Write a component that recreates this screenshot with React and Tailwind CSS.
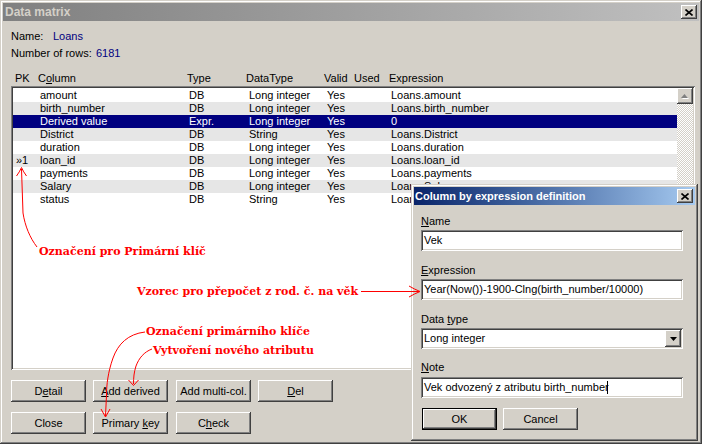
import React from "react";

const raised =
  "shadow-[inset_-1px_-1px_#404040,inset_1px_1px_#ffffff,inset_-2px_-2px_#808080]";
const sunken =
  "shadow-[inset_1px_1px_#808080,inset_-1px_-1px_#ffffff,inset_2px_2px_#404040,inset_-2px_-2px_#d4d0c8]";

function CloseX() {
  return (
    <svg width="8" height="7" viewBox="0 0 8 7">
      <path d="M0.5 0.5 L7.5 6.5 M7.5 0.5 L0.5 6.5" stroke="#000" strokeWidth="1.6" fill="none" />
    </svg>
  );
}

function CloseBtn() {
  return (
    <div className={`ml-auto w-[16px] h-[14px] bg-[#d4d0c8] flex items-center justify-center ${raised}`}>
      <CloseX />
    </div>
  );
}

function Btn({ children, className = "" }) {
  return (
    <div
      className={`w-[75px] h-[22px] bg-[#d4d0c8] flex items-center justify-center ${raised} ${className}`}
    >
      <span className="whitespace-pre">{children}</span>
    </div>
  );
}

const rows = [
  ["", "amount", "DB", "Long integer", "Yes", "", "Loans.amount"],
  ["", "birth_number", "DB", "Long integer", "Yes", "", "Loans.birth_number"],
  ["", "Derived value", "Expr.", "Long integer", "Yes", "", "0"],
  ["", "District", "DB", "String", "Yes", "", "Loans.District"],
  ["", "duration", "DB", "Long integer", "Yes", "", "Loans.duration"],
  ["»1", "loan_id", "DB", "Long integer", "Yes", "", "Loans.loan_id"],
  ["", "payments", "DB", "Long integer", "Yes", "", "Loans.payments"],
  ["", "Salary", "DB", "Long integer", "Yes", "", "Loans.Salary"],
  ["", "status", "DB", "String", "Yes", "", "Loans.status"],
];

function Row({ r, i }) {
  const sel = i === 2;
  const bg = sel ? "bg-[#000080] text-white" : i % 2 === 1 ? "bg-[#e6e6e6]" : "bg-white";
  return (
    <div className={`flex h-[13px] pl-[3px] whitespace-nowrap ${bg}`}>
      <span className="w-[24px]">{r[0]}</span>
      <span className="w-[149px]">{r[1]}</span>
      <span className="w-[60px]">{r[2]}</span>
      <span className="w-[78px]">{r[3]}</span>
      <span className="w-[30px]">{r[4]}</span>
      <span className="w-[34px]">{r[5]}</span>
      <span className="flex-1">{r[6]}</span>
    </div>
  );
}

function Field({ children, className = "" }) {
  return (
    <div className={`w-[262px] h-[21px] bg-white flex items-center pl-[3px] ${sunken} ${className}`}>
      {children}
    </div>
  );
}

function Dialog() {
  return (
    <div className="absolute left-[411px] top-[184px] w-[287px] h-[257px] bg-[#d4d0c8] p-[3px] shadow-[inset_-1px_-1px_#404040,inset_1px_1px_#d4d0c8,inset_-2px_-2px_#808080,inset_2px_2px_#ffffff]">
      <div className="h-[18px] flex items-center pl-[1px] pr-[2px] bg-linear-to-r from-[#0a246a] to-[#a6caf0]">
        <span className="font-bold text-[11px] text-white whitespace-nowrap">
          Column by expression definition
        </span>
        <CloseBtn />
      </div>
      <div className="pl-[7px]">
        <div className="mt-[10px]">
          <u>N</u>ame
        </div>
        <Field className="mt-[2px]">Vek</Field>
        <div className="mt-[13px]">
          <u>E</u>xpression
        </div>
        <Field className="mt-[2px]">Year(Now())-1900-Clng(birth_number/10000)</Field>
        <div className="mt-[13px]">
          Data <u>t</u>ype
        </div>
        <div className={`mt-[2px] w-[262px] h-[21px] bg-white flex items-center pl-[3px] pr-[2px] ${sunken}`}>
          <span className="flex-1">Long integer</span>
          <div className={`w-[16px] h-[17px] bg-[#d4d0c8] flex items-center justify-center ${raised}`}>
            <svg width="7" height="4" viewBox="0 0 7 4">
              <path d="M0 0 H7 L3.5 4 Z" fill="#000" />
            </svg>
          </div>
        </div>
        <div className="mt-[12px]">
          <u>N</u>ote
        </div>
        <Field className="mt-[3px]">
          <span>Vek odvozený z atributu birth_number</span>
          <span className="w-px h-[13px] bg-black -ml-[2px]" />
        </Field>
        <div className="mt-[10px] flex gap-[6px] ml-px">
          <div className="w-[75px] h-[22px] bg-[#d4d0c8] flex items-center justify-center shadow-[inset_0_0_0_1px_#000,inset_-2px_-2px_#404040,inset_2px_2px_#ffffff,inset_-3px_-3px_#808080]">
            OK
          </div>
          <Btn>Cancel</Btn>
        </div>
      </div>
    </div>
  );
}

function Annotations() {
  const t =
    "absolute whitespace-nowrap font-['DejaVu_Serif',serif] font-bold text-[11px] leading-[13px] text-[#ff0000]";
  return (
    <>
      <svg className="absolute left-0 top-0 pointer-events-none" width="702" height="444">
        <g stroke="#ff0000" strokeWidth="1" fill="none">
          <path d="M37 247 C30 238 25 226 23 213 L21.5 169" />
          <path d="M16.5 176 Q19.5 172 21.5 167.5 Q23.5 172 26.5 176" />
          <path d="M361 291.5 L419 291.5" />
          <path d="M409 286 Q414 289 420 291.5 Q414 294 409 297" />
          <path d="M145 332 C128 334 118 344 113 358 C108 372 106.5 385 106.5 395 L105.5 416" />
          <path d="M101 409 L105.5 417 L110 409" />
          <path d="M152 349 C144 352 139 358 136 366 C134 372 133.5 378 133.5 384" />
          <path d="M128.5 380 L133.5 385.5 L138.5 380" />
        </g>
      </svg>
      <span className={`${t} left-[39px] top-[245px]`}>Označení pro Primární klíč</span>
      <span className={`${t} left-[137px] top-[285px]`}>Vzorec pro přepočet z rod. č. na věk</span>
      <span className={`${t} left-[146px] top-[325px]`}>Označení primárního klíče</span>
      <span className={`${t} left-[153px] top-[344px]`}>Vytvoření nového atributu</span>
    </>
  );
}

export default function App() {
  return (
    <div className="relative w-[702px] h-[444px] overflow-hidden bg-[#d4d0c8] p-[3px] font-['Liberation_Sans',Arial,sans-serif] text-[11px] leading-[13px] text-black shadow-[inset_-1px_-1px_#404040,inset_1px_1px_#d4d0c8,inset_-2px_-2px_#808080,inset_2px_2px_#ffffff]">
      <div className="h-[18px] flex items-center pl-[2px] pr-[2px] bg-linear-to-r from-[#808080] to-[#c0c0c0]">
        <span className="font-bold text-[12px] text-[#d4d0c8]">Data matrix</span>
        <CloseBtn />
      </div>
      <div className="pl-[8px]">
        <div className="mt-[9px] flex">
          <span className="w-[42px]">Name:</span>
          <span className="text-[#000080]">Loans</span>
        </div>
        <div className="mt-[4px] flex">
          <span className="w-[85px]">Number of rows:</span>
          <span className="text-[#000080]">6181</span>
        </div>
        <div className="mt-[12px] flex pl-[4px] whitespace-nowrap">
          <span className="w-[23px]">PK</span>
          <span className="w-[149px]">
            C<u>o</u>lumn
          </span>
          <span className="w-[59px]">Type</span>
          <span className="w-[78px]">DataType</span>
          <span className="w-[30px]">Valid</span>
          <span className="w-[35px]">Used</span>
          <span>Expression</span>
        </div>
        <div className={`mt-[1px] w-[684px] h-[284px] bg-white p-[2px] flex ${sunken}`}>
          <div className="w-[664px] pt-px">
            {rows.map((r, i) => (
              <Row key={i} r={r} i={i} />
            ))}
          </div>
          <div className="w-[16px] flex flex-col bg-[repeating-conic-gradient(#ffffff_0_25%,#d4d0c8_0_50%)] bg-[length:2px_2px]">
            <div className={`w-[16px] h-[16px] bg-[#d4d0c8] flex items-center justify-center ${raised}`}>
              <svg width="8" height="5" viewBox="0 0 8 5">
                <path d="M1 5 L4.5 1 L8 5 Z" fill="#ffffff" />
                <path d="M0 4 L3.5 0 L7 4 Z" fill="#808080" />
              </svg>
            </div>
            <div className="flex-1" />
            <div className={`w-[16px] h-[16px] bg-[#d4d0c8] ${raised}`} />
          </div>
        </div>
        <div className="mt-[10px] flex gap-[7px]">
          <Btn>
            D<u>e</u>tail
          </Btn>
          <Btn>
            <u>A</u>dd derived
          </Btn>
          <Btn className="ml-px">Add multi-col.</Btn>
          <Btn>
            <u>D</u>el
          </Btn>
        </div>
        <div className="mt-[10px] flex gap-[7px]">
          <Btn>Close</Btn>
          <Btn>
            Primary <u>k</u>ey
          </Btn>
          <Btn className="ml-px">
            C<u>h</u>eck
          </Btn>
        </div>
      </div>
      <Dialog />
      <Annotations />
    </div>
  );
}
